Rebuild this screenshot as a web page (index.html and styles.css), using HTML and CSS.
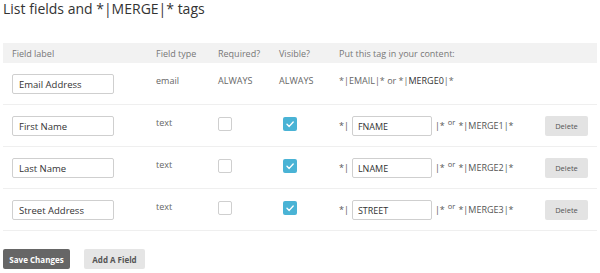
FILE: index.html
```html
<!DOCTYPE html>
<html lang="en">
<head>
  <meta charset="UTF-8">
  <title>List fields</title>
  <link rel="stylesheet" href="styles.css">
</head>
<body>
  <h1>List fields and *|MERGE|* tags</h1>

  <!-- Fields table -->
  <table class="fields">
    <colgroup>
      <col class="c-label">
      <col class="c-type">
      <col class="c-req">
      <col class="c-vis">
      <col class="c-tag">
      <col class="c-del">
    </colgroup>
    <thead>
      <tr>
        <th>Field label</th>
        <th>Field type</th>
        <th>Required?</th>
        <th>Visible?</th>
        <th colspan="2">Put this tag in your content:</th>
      </tr>
    </thead>
    <tbody>
      <tr>
        <td><input class="text-input" type="text" value="Email Address"></td>
        <td>email</td>
        <td>ALWAYS</td>
        <td>ALWAYS</td>
        <td class="tag-static">*|EMAIL|* or *|<b>MERGE0</b>|*</td>
        <td></td>
      </tr>
      <tr>
        <td><input class="text-input" type="text" value="First Name"></td>
        <td>text</td>
        <td><span class="check"></span></td>
        <td><span class="check on"><svg viewBox="0 0 14 14"><path d="M4 7.2l2.2 2.2L10.2 5"/></svg></span></td>
        <td><div class="tag">*| <input class="tag-input" type="text" value="FNAME"> |* <sup>or</sup> *|MERGE1|*</div></td>
        <td><button class="btn-delete">Delete</button></td>
      </tr>
      <tr>
        <td><input class="text-input" type="text" value="Last Name"></td>
        <td>text</td>
        <td><span class="check"></span></td>
        <td><span class="check on"><svg viewBox="0 0 14 14"><path d="M4 7.2l2.2 2.2L10.2 5"/></svg></span></td>
        <td><div class="tag">*| <input class="tag-input" type="text" value="LNAME"> |* <sup>or</sup> *|MERGE2|*</div></td>
        <td><button class="btn-delete">Delete</button></td>
      </tr>
      <tr>
        <td><input class="text-input" type="text" value="Street Address"></td>
        <td>text</td>
        <td><span class="check"></span></td>
        <td><span class="check on"><svg viewBox="0 0 14 14"><path d="M4 7.2l2.2 2.2L10.2 5"/></svg></span></td>
        <td><div class="tag">*| <input class="tag-input" type="text" value="STREET"> |* <sup>or</sup> *|MERGE3|*</div></td>
        <td><button class="btn-delete">Delete</button></td>
      </tr>
    </tbody>
  </table>

  <div class="actions">
    <button class="btn btn-save">Save Changes</button>
    <button class="btn btn-add">Add A Field</button>
  </div>
</body>
</html>
```

FILE: styles.css
```css
/* Global */
body {
  margin: 0;
  padding: 0 3px;
  font-family: 'Open Sans', sans-serif;
  color: #555;
  background: #fff;
}

h1 {
  margin: 0 0 25px;
  font-size: 14px;
  line-height: 18px;
  font-weight: 400;
  color: #333;
}

/* Table */
.fields {
  width: 594px;
  border-collapse: collapse;
  table-layout: fixed;
  font-size: 9px;
}

.c-label { width: 153px; }
.c-type { width: 62px; }
.c-req { width: 61px; }
.c-vis { width: 60px; }
.c-tag { width: 206px; }
.c-del { width: 52px; }

.fields th {
  height: 20px;
  padding: 0;
  background: #f2f2f2;
  text-align: left;
  font-weight: 400;
  color: #777;
}

.fields th:first-child,
.fields td:first-child {
  padding-left: 9px;
}

.fields td {
  height: 20px;
  padding: 11px 0 10px;
  vertical-align: top;
  line-height: 14px;
  border-bottom: 1px solid #efefef;
  color: #666;
}

.text-input {
  display: block;
  box-sizing: border-box;
  width: 102px;
  height: 20px;
  margin: 0;
  padding: 0 6px;
  border: 1px solid #cfcfcf;
  border-radius: 2px;
  font-family: inherit;
  font-size: 9.5px;
  color: #333;
}

.tag-static {
  color: #555;
}

.tag-static b {
  font-weight: 400;
  color: #333;
}

/* Checkboxes */
.check {
  display: block;
  box-sizing: border-box;
  width: 14px;
  height: 14px;
  margin-top: 1px;
  border: 1px solid #cfcfcf;
  border-radius: 2px;
  background: #fff;
}

.check.on {
  margin-left: 4px;
  border: none;
  background: #4ab3d5;
}

.check svg {
  display: block;
  width: 14px;
  height: 14px;
  fill: none;
  stroke: #fff;
  stroke-width: 1.4;
  stroke-linecap: round;
  stroke-linejoin: round;
}

/* Merge tag */
.tag {
  display: flex;
  align-items: center;
  gap: 3px;
  height: 20px;
  white-space: nowrap;
  color: #555;
}

.tag sup {
  font-size: 7.5px;
  line-height: 1;
  align-self: flex-start;
  margin-top: 3px;
}

.tag-input {
  box-sizing: border-box;
  width: 80px;
  height: 20px;
  margin: 0;
  padding: 0 5px;
  border: 1px solid #cfcfcf;
  border-radius: 2px;
  font-family: inherit;
  font-size: 9px;
  color: #333;
}

.btn-delete {
  display: block;
  width: 43px;
  height: 20px;
  margin: 0;
  padding: 0;
  border: none;
  border-radius: 2px;
  background: #e3e3e3;
  font-family: inherit;
  font-size: 7.5px;
  color: #555;
}

/* Bottom buttons */
.actions {
  display: flex;
  gap: 14px;
  margin-top: 18px;
}

.btn {
  height: 20px;
  padding: 0;
  border: none;
  border-radius: 2px;
  font-family: inherit;
  font-size: 8px;
  font-weight: 700;
}

.btn-save {
  width: 67px;
  background: #666;
  color: #fff;
}

.btn-add {
  width: 61px;
  background: #e5e5e5;
  color: #555;
}
```
